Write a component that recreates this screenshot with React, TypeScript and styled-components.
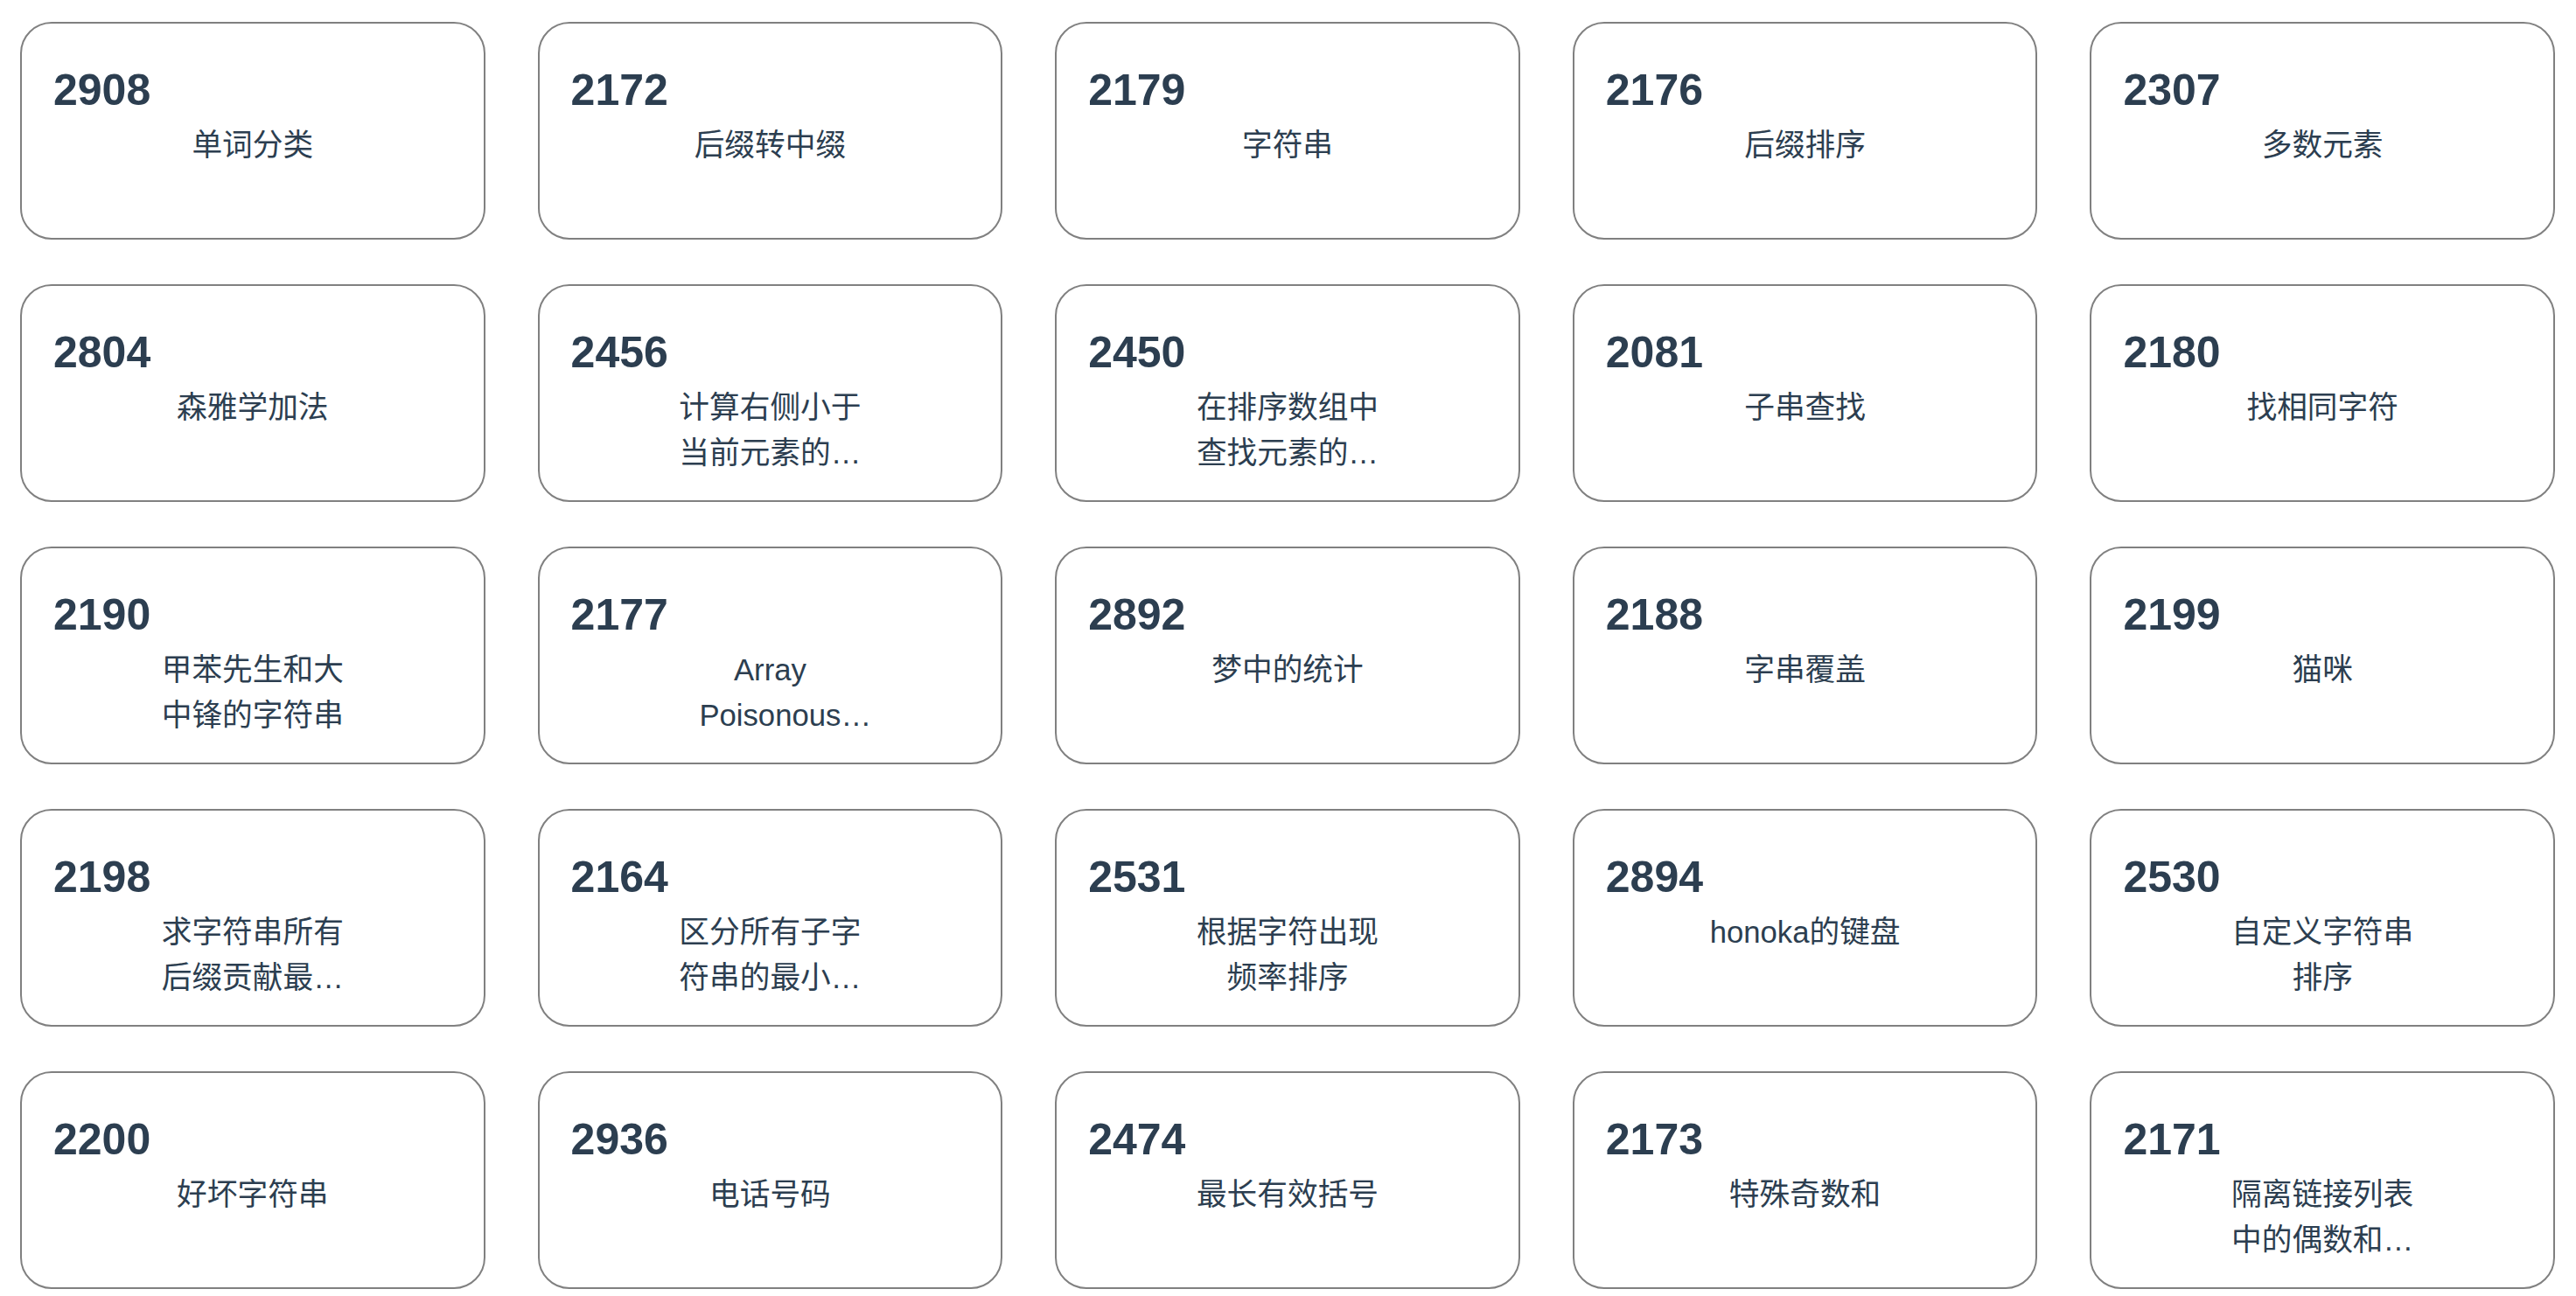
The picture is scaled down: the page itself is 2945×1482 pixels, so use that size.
import React from "react";
import styled, { createGlobalStyle } from "styled-components";

const GlobalStyle = createGlobalStyle`
  html, body {
    margin: 0;
    padding: 0;
    background: #ffffff;
  }
  body {
    font-family: "Liberation Sans", Arial, "Noto Sans CJK SC", sans-serif;
    color: #2c3e50;
  }
`;

const Page = styled.main`
  box-sizing: border-box;
  width: 100%;
  padding: 25px 24px 25px 23px;
`;

const Grid = styled.section`
  display: grid;
  grid-template-columns: repeat(5, 1fr);
  column-gap: 60px;
  row-gap: 51px;
`;

const Card = styled.article`
  box-sizing: border-box;
  height: 249px;
  padding: 48px 36px 0;
  border: 2px solid #808080;
  border-radius: 36px;
  background: #ffffff;
  overflow: hidden;
  cursor: pointer;
`;

const Number = styled.h2`
  margin: 0;
  font-family: "Liberation Sans", Arial, sans-serif;
  font-size: 50px;
  font-weight: 700;
  line-height: 57px;
  color: #2c3e50;
  text-align: left;
`;

const Title = styled.p`
  width: 225px;
  margin: 8px auto 0;
  font-family: "Liberation Sans", Arial, "Noto Sans CJK SC", sans-serif;
  font-size: 34.7px;
  font-weight: 400;
  line-height: 52px;
  color: #2c3e50;
  text-align: center;
  display: -webkit-box;
  -webkit-box-orient: vertical;
  -webkit-line-clamp: 2;
  overflow: hidden;
`;

type Problem = { id: number; title: string };

const problems: Problem[] = [
  { id: 2908, title: "单词分类" },
  { id: 2172, title: "后缀转中缀" },
  { id: 2179, title: "字符串" },
  { id: 2176, title: "后缀排序" },
  { id: 2307, title: "多数元素" },
  { id: 2804, title: "森雅学加法" },
  { id: 2456, title: "计算右侧小于当前元素的个数" },
  { id: 2450, title: "在排序数组中查找元素的第一个和最后一个位置" },
  { id: 2081, title: "子串查找" },
  { id: 2180, title: "找相同字符" },
  { id: 2190, title: "甲苯先生和大中锋的字符串" },
  { id: 2177, title: "Array Poisonous Plants" },
  { id: 2892, title: "梦中的统计" },
  { id: 2188, title: "字串覆盖" },
  { id: 2199, title: "猫咪" },
  { id: 2198, title: "求字符串所有后缀贡献最大值" },
  { id: 2164, title: "区分所有子字符串的最小长度" },
  { id: 2531, title: "根据字符出现频率排序" },
  { id: 2894, title: "honoka的键盘" },
  { id: 2530, title: "自定义字符串排序" },
  { id: 2200, title: "好坏字符串" },
  { id: 2936, title: "电话号码" },
  { id: 2474, title: "最长有效括号" },
  { id: 2173, title: "特殊奇数和" },
  { id: 2171, title: "隔离链接列表中的偶数和奇数" },
];

export default function App() {
  return (
    <>
      <GlobalStyle />
      <Page>
        <Grid>
          {problems.map((p) => (
            <Card key={p.id}>
              <Number>{p.id}</Number>
              <Title>{p.title}</Title>
            </Card>
          ))}
        </Grid>
      </Page>
    </>
  );
}
